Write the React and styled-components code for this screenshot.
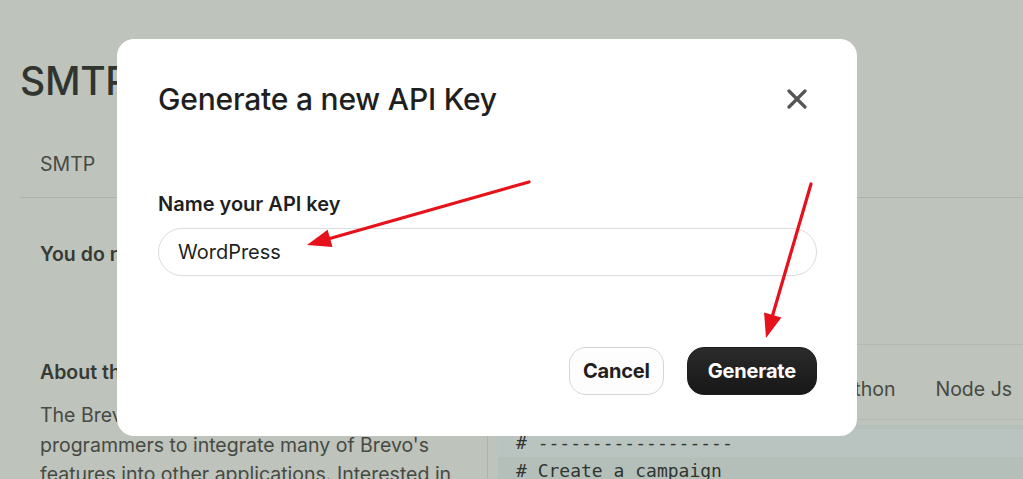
import React from 'react';
import styled, { createGlobalStyle } from 'styled-components';

const GlobalStyle = createGlobalStyle`
  html, body {
    margin: 0;
    padding: 0;
    background: #bec3bb;
    overflow: hidden;
  }
  body {
    font-family: Inter, "Noto Sans", sans-serif;
    color: #363a34;
  }
`;

const Page = styled.div`
  width: 1023px;
  height: 479px;
  overflow: hidden;
  position: relative;
  background: #bec3bb;
`;

const Heading = styled.h1`
  margin: 0;
  padding: 57px 0 0 20px;
  font-size: 39px;
  line-height: 48px;
  font-weight: 500;
  color: #30352f;
  letter-spacing: -0.3px;
`;

const TabBar = styled.div`
  display: flex;
  gap: 40px;
  margin: 29px 0 0 20px;
  padding: 0 20px;
  height: 63px;
  border-bottom: 1px solid #adb2aa;
`;

const Tab = styled.div`
  font-size: 19.5px;
  line-height: 24px;
  padding-top: 18px;
  color: #464a43;
`;

const Columns = styled.div`
  display: grid;
  grid-template-columns: 467px 1fr;
  margin-left: 20px;
`;

const LeftCol = styled.div`
  padding: 44px 0 0 20px;
  display: flex;
  flex-direction: column;
`;

const Strong = styled.div`
  font-size: 19.5px;
  line-height: 24px;
  font-weight: 600;
  color: #363a34;
  white-space: nowrap;
  margin-top: ${p => p.$mt || 0}px;
`;

const Para = styled.p`
  margin: 17px 0 0;
  font-size: 19.5px;
  line-height: 29.5px;
  color: #464a43;
  width: 440px;
`;

const RightCol = styled.div`
  border-left: 1px solid #adb2aa;
  display: flex;
  flex-direction: column;
`;

const Spacer = styled.div`
  height: 146px;
`;

const CodeTabs = styled.div`
  display: flex;
  gap: 40px;
  height: 76px;
  align-items: center;
  padding: 13px 0 0 174px;
  box-sizing: border-box;
  border-top: 1px solid #b3b8b0;
  border-bottom: 1px solid #b3b8b0;
  white-space: nowrap;
`;

const CodeTab = styled.div`
  font-size: 19.5px;
  color: #464a43;
`;

const Code = styled.pre`
  margin: 5px 0 0 10px;
  padding: 4px 0 0 18px;
  background: #b5bfba;
  font-family: "DejaVu Sans Mono", "Liberation Mono", monospace;
  font-size: 18px;
  line-height: 28px;
  color: #30352f;
`;

const CodeLine = styled.div`
  background: ${p => (p.$hl ? '#b9c4c0' : 'transparent')};
  margin-left: -18px;
  padding-left: 18px;
`;

const Modal = styled.div`
  position: absolute;
  left: 117px;
  top: 39px;
  width: 740px;
  height: 397px;
  box-sizing: border-box;
  background: #fff;
  border-radius: 17px;
  padding: 40px 40px 41px 41px;
  display: flex;
  flex-direction: column;
`;

const ModalHeader = styled.div`
  display: flex;
  align-items: center;
  justify-content: space-between;
  height: 40px;
`;

const Title = styled.h2`
  margin: 0;
  font-size: 30px;
  font-weight: 500;
  color: #1f1f1f;
  letter-spacing: -0.2px;
`;

const CloseBtn = styled.button`
  width: 40px;
  height: 40px;
  border: none;
  background: transparent;
  padding: 0;
  display: flex;
  align-items: center;
  justify-content: center;
`;

const Label = styled.label`
  margin-top: 73px;
  font-size: 20px;
  line-height: 24px;
  font-weight: 600;
  color: #1f1f1f;
`;

const Input = styled.div`
  margin-top: 12px;
  height: 48px;
  box-sizing: border-box;
  border: 1px solid #dcdcdc;
  border-radius: 24px;
  padding: 0 19px;
  display: flex;
  align-items: center;
  font-size: 20px;
  color: #1f1f1f;
`;

const Actions = styled.div`
  margin-top: auto;
  display: flex;
  justify-content: flex-end;
  gap: 23px;
`;

const Button = styled.button`
  height: 48px;
  padding: 0 ${p => (p.$primary ? 20 : 13)}px;
  border-radius: 17px;
  font-family: Inter, "Noto Sans", sans-serif;
  font-size: 20px;
  font-weight: 700;
  letter-spacing: -0.2px;
  border: 1px solid ${p => (p.$primary ? '#1f1f1f' : '#d6d6d6')};
  background: ${p => (p.$primary ? 'linear-gradient(#2b2b2b, #171717)' : '#fdfdfd')};
  color: ${p => (p.$primary ? '#fff' : '#1f1f1f')};
`;

const Annotations = styled.svg`
  position: absolute;
  left: 0;
  top: 0;
  pointer-events: none;
`;

function Arrow({ x1, y1, x2, y2 }) {
  const dx = x2 - x1;
  const dy = y2 - y1;
  const len = Math.hypot(dx, dy);
  const ux = dx / len;
  const uy = dy / len;
  const hl = 24;
  const hw = 9;
  const bx = x2 - ux * hl;
  const by = y2 - uy * hl;
  const pts = `${x2},${y2} ${bx - uy * hw},${by + ux * hw} ${bx + uy * hw},${by - ux * hw}`;
  return (
    <g>
      <line x1={x1} y1={y1} x2={bx + ux * 4} y2={by + uy * 4} stroke="#e6111b" strokeWidth="3.2" strokeLinecap="round" />
      <polygon points={pts} fill="#e6111b" />
    </g>
  );
}

export default function App() {
  return (
    <Page>
      <GlobalStyle />
      <Heading>SMTP</Heading>
      <TabBar>
        <Tab>SMTP</Tab>
      </TabBar>
      <Columns>
        <LeftCol>
          <Strong>You do not have any API keys yet</Strong>
          <Strong $mt={94}>About the API</Strong>
          <Para>
            The Brevo API makes it easy for<br />
            programmers to integrate many of Brevo's<br />
            features into other applications. Interested in<br />
            learning more?
          </Para>
        </LeftCol>
        <RightCol>
          <Spacer />
          <CodeTabs>
            <CodeTab>cURL</CodeTab>
            <CodeTab>PHP</CodeTab>
            <CodeTab>Python</CodeTab>
            <CodeTab>Node Js</CodeTab>
            <CodeTab>Ruby</CodeTab>
          </CodeTabs>
          <Code>
            <CodeLine $hl># ------------------</CodeLine>
            <CodeLine># Create a campaign</CodeLine>
          </Code>
        </RightCol>
      </Columns>

      <Modal>
        <ModalHeader>
          <Title>Generate a new API Key</Title>
          <CloseBtn aria-label="Close">
            <svg width="20" height="20" viewBox="0 0 20 20">
              <path d="M2 2 L18 18 M18 2 L2 18" stroke="#555" strokeWidth="3.2" strokeLinecap="round" />
            </svg>
          </CloseBtn>
        </ModalHeader>
        <Label>Name your API key</Label>
        <Input>WordPress</Input>
        <Actions>
          <Button>Cancel</Button>
          <Button $primary>Generate</Button>
        </Actions>
      </Modal>

      <Annotations width="1023" height="479">
        <Arrow x1={529} y1={182} x2={307} y2={245} />
        <Arrow x1={811} y1={184} x2={766} y2={338} />
      </Annotations>
    </Page>
  );
}
